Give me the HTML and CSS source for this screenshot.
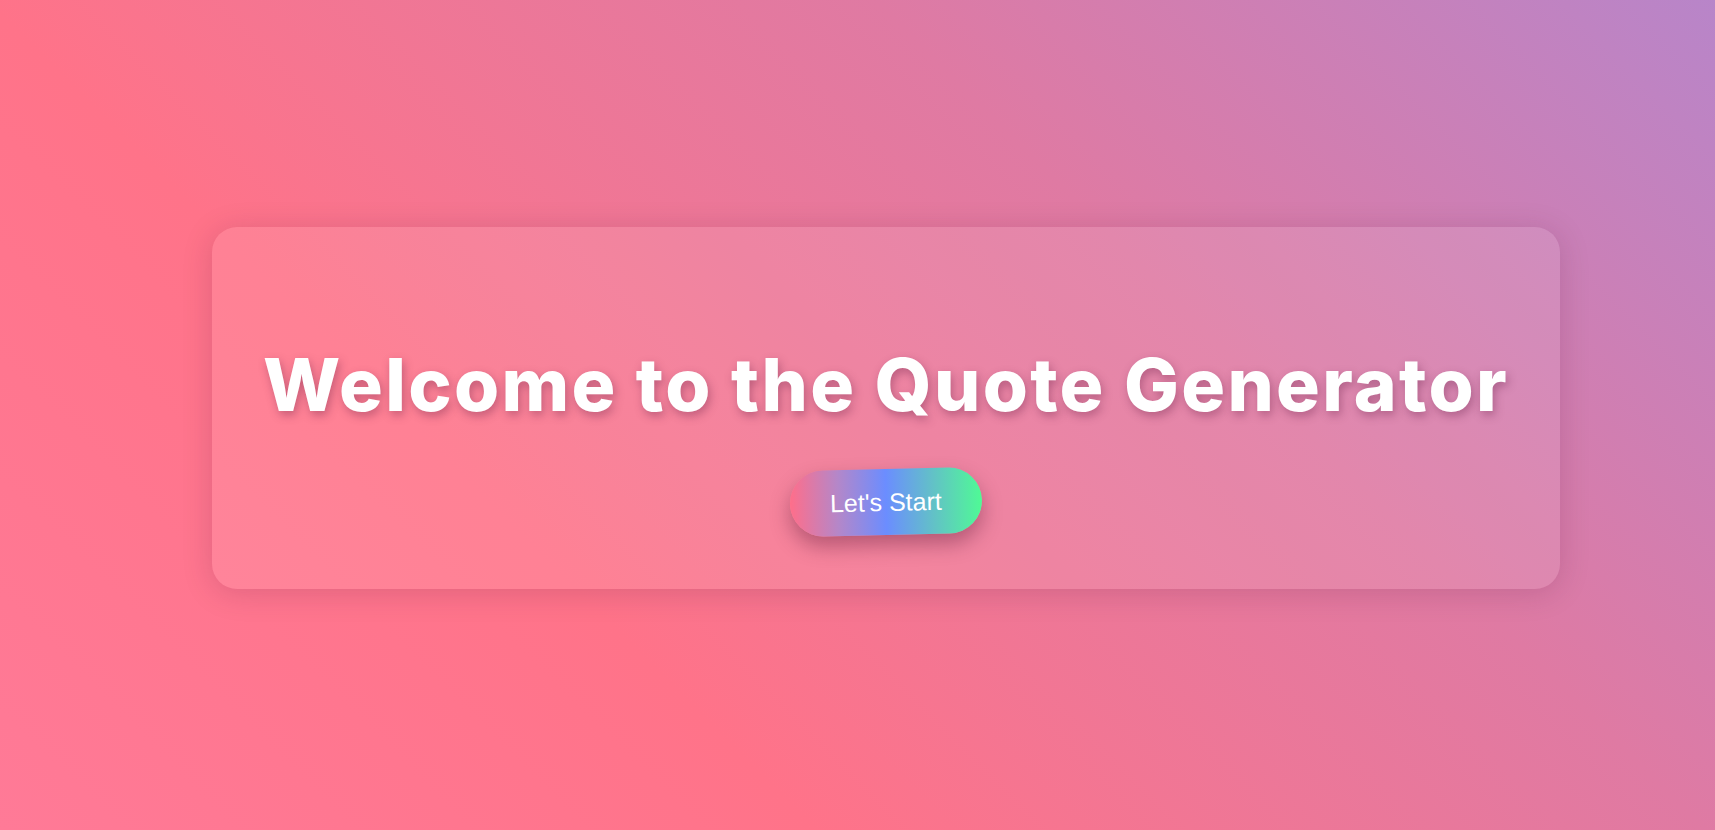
FILE: index.html
```html
<!DOCTYPE html>
<html lang="en">
<head>
<meta charset="utf-8">
<title>Quote Generator</title>
<link rel="stylesheet" href="styles.css">
</head>
<body>
<main class="page">
  <section class="card">
    <h1 class="title">Welcome to the Quote Generator</h1>
    <button class="start-btn" type="button">Let's Start</button>
  </section>
</main>
</body>
</html>
```
FILE: styles.css
```css
html, body {
  margin: 0;
  height: 100%;
}
body {
  background: linear-gradient(45deg, #ff7a97 0%, #ff7389 32%, #df7aa3 67%, #b885c9 100%);
  font-family: "Liberation Sans", Arial, sans-serif;
  overflow: hidden;
}
.page {
  box-sizing: border-box;
  height: 100%;
  padding: 227px 0 0 212px;
}
.card {
  box-sizing: border-box;
  width: 1348px;
  height: 362px;
  padding-top: 114px;
  display: flex;
  flex-direction: column;
  align-items: center;
  gap: 40px;
  border-radius: 25px;
  background: rgba(255, 255, 255, 0.1);
  box-shadow: 0 4px 30px rgba(80, 20, 60, 0.18);
}
.title {
  margin: 0;
  font-family: Inter, "Noto Sans", sans-serif;
  font-weight: 800;
  font-size: 73px;
  line-height: 1.2;
  color: #fff;
  letter-spacing: 2.3px;
  text-shadow: 2px 4px 10px rgba(90, 20, 60, 0.35);
  white-space: nowrap;
}
.start-btn {
  font-family: "Liberation Sans", Arial, sans-serif;
  font-size: 25px;
  line-height: 28px;
  color: #fff;
  padding: 19px 40px;
  border: none;
  border-radius: 50px;
  background: linear-gradient(90deg, #ff6e8a 0%, #b487c9 25%, #6b8dff 50%, #62c2c6 75%, #4ffa95 100%);
  box-shadow: 0 10px 20px rgba(70, 10, 40, 0.35);
  transform: rotate(-1.3deg);
  cursor: pointer;
}
```
